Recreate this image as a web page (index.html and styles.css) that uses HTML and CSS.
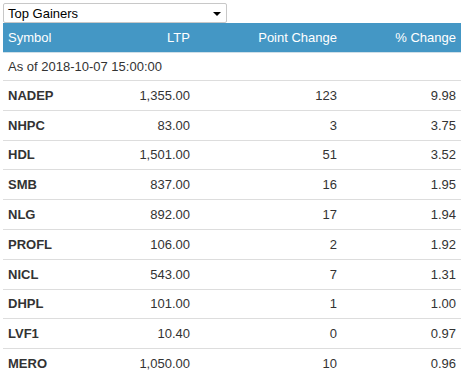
FILE: index.html
```html
<!DOCTYPE html>
<html>
<head>
<meta charset="utf-8">
<link rel="stylesheet" href="styles.css">
</head>
<body>
<div class="picker">
  <span class="picker-label">Top Gainers</span>
  <span class="picker-arrow"></span>
</div>
<table class="gainers">
  <colgroup>
    <col class="c-sym"><col class="c-ltp"><col class="c-pt"><col class="c-pct">
  </colgroup>
  <thead>
    <tr><th class="left">Symbol</th><th>LTP</th><th>Point Change</th><th>% Change</th></tr>
  </thead>
  <tbody>
    <tr class="asof"><td colspan="4">As of 2018-10-07 15:00:00</td></tr>
    <tr><td class="sym">NADEP</td><td>1,355.00</td><td>123</td><td>9.98</td></tr>
    <tr><td class="sym">NHPC</td><td>83.00</td><td>3</td><td>3.75</td></tr>
    <tr><td class="sym">HDL</td><td>1,501.00</td><td>51</td><td>3.52</td></tr>
    <tr><td class="sym">SMB</td><td>837.00</td><td>16</td><td>1.95</td></tr>
    <tr><td class="sym">NLG</td><td>892.00</td><td>17</td><td>1.94</td></tr>
    <tr><td class="sym">PROFL</td><td>106.00</td><td>2</td><td>1.92</td></tr>
    <tr><td class="sym">NICL</td><td>543.00</td><td>7</td><td>1.31</td></tr>
    <tr><td class="sym">DHPL</td><td>101.00</td><td>1</td><td>1.00</td></tr>
    <tr><td class="sym">LVF1</td><td>10.40</td><td>0</td><td>0.97</td></tr>
    <tr><td class="sym">MERO</td><td>1,050.00</td><td>10</td><td>0.96</td></tr>
  </tbody>
</table>
</body>
</html>
```
FILE: styles.css
```css
html, body {
  margin: 0;
  background: #fff;
}
body {
  padding: 3px 2px 0 3px;
  font-family: "Liberation Sans", Arial, sans-serif;
  font-size: 13px;
  color: #333;
}
.picker {
  box-sizing: border-box;
  width: 224px;
  height: 20px;
  border: 1px solid #c8c8c8;
  border-radius: 2px;
  display: flex;
  align-items: center;
  justify-content: space-between;
  padding: 0 5px 0 4px;
  color: #000;
  font-size: 13px;
}
.picker-arrow {
  width: 0;
  height: 0;
  border-left: 4px solid transparent;
  border-right: 4px solid transparent;
  border-top: 4px solid #000;
  margin-top: 1px;
}
.gainers {
  width: 458px;
  border-collapse: collapse;
  table-layout: fixed;
}
.c-sym { width: 100px; }
.c-ltp { width: 92px; }
.c-pt { width: 147px; }
.c-pct { width: 119px; }
.gainers th {
  background: #4497c5;
  color: #fff;
  font-weight: normal;
  text-align: right;
  height: 29px;
  padding: 0 5px;
  border-bottom: 1px solid #cfdfe8;
}
.gainers th.left { text-align: left; }
.gainers td {
  text-align: right;
  padding: 0 5px;
  height: 28.8px;
  border-bottom: 1px solid #dddddd;
  white-space: nowrap;
}
.gainers .asof td {
  text-align: left;
  height: 27px;
}
.gainers td.sym {
  text-align: left;
  font-weight: bold;
}
```
